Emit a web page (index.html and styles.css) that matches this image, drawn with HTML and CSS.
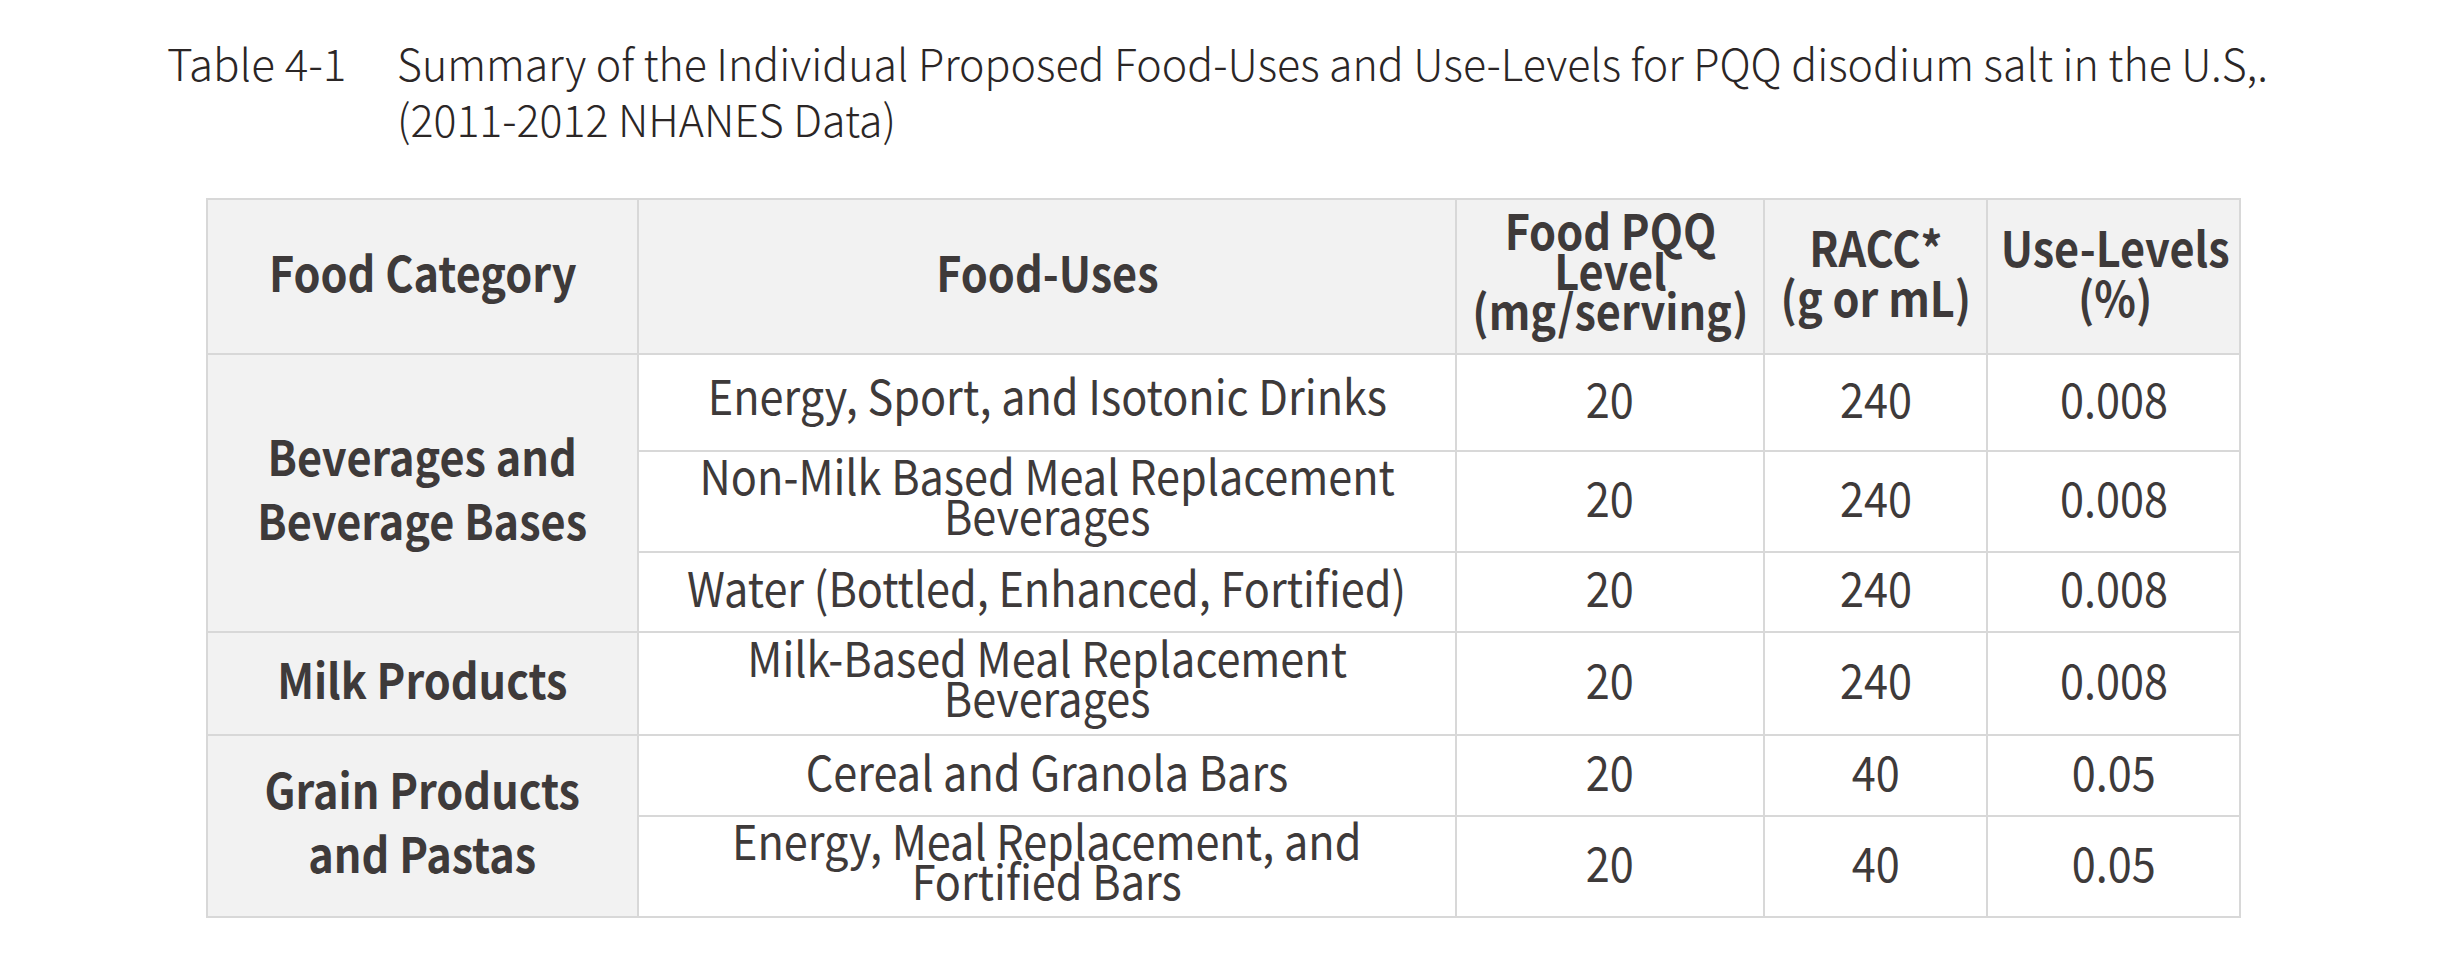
FILE: index.html
```html
<!DOCTYPE html>
<html>
<head>
<meta charset="utf-8">
<link rel="stylesheet" href="styles.css">
</head>
<body>
<div class="page">
  <div class="caption">
    <div class="cap-label">Table 4-1</div>
    <div class="cap-text">Summary of the Individual Proposed Food-Uses and Use-Levels for PQQ disodium salt in the U.S,.<br>(2011-2012 NHANES Data)</div>
  </div>
  <table class="data">
    <colgroup>
      <col class="c1"><col class="c2"><col class="c3"><col class="c4"><col class="c5">
    </colgroup>
    <thead>
      <tr class="h-row">
        <th><span class="t">Food Category</span></th>
        <th><span class="t">Food-Uses</span></th>
        <th><span class="t tight">Food PQQ<br>Level<br>(mg/serving)</span></th>
        <th><span class="t mid">RACC*<br>(g or mL)</span></th>
        <th><span class="t mid">Use-Levels<br>(%)</span></th>
      </tr>
    </thead>
    <tbody>
      <tr class="r1">
        <th rowspan="3" class="cat"><span class="t wide">Beverages and<br>Beverage Bases</span></th>
        <td><span class="t raise">Energy, Sport, and Isotonic Drinks</span></td>
        <td><span class="t">20</span></td><td><span class="t">240</span></td><td><span class="t">0.008</span></td>
      </tr>
      <tr class="r2">
        <td><span class="t tight">Non-Milk Based Meal Replacement<br>Beverages</span></td>
        <td><span class="t">20</span></td><td><span class="t">240</span></td><td><span class="t">0.008</span></td>
      </tr>
      <tr class="r3">
        <td><span class="t">Water (Bottled, Enhanced, Fortified)</span></td>
        <td><span class="t">20</span></td><td><span class="t">240</span></td><td><span class="t">0.008</span></td>
      </tr>
      <tr class="r4">
        <th class="cat"><span class="t">Milk Products</span></th>
        <td><span class="t tight">Milk-Based Meal Replacement<br>Beverages</span></td>
        <td><span class="t">20</span></td><td><span class="t">240</span></td><td><span class="t">0.008</span></td>
      </tr>
      <tr class="r5">
        <th rowspan="2" class="cat"><span class="t wide">Grain Products<br>and Pastas</span></th>
        <td><span class="t">Cereal and Granola Bars</span></td>
        <td><span class="t">20</span></td><td><span class="t">40</span></td><td><span class="t">0.05</span></td>
      </tr>
      <tr class="r6">
        <td><span class="t tight">Energy, Meal Replacement, and<br>Fortified Bars</span></td>
        <td><span class="t">20</span></td><td><span class="t">40</span></td><td><span class="t">0.05</span></td>
      </tr>
    </tbody>
  </table>
</div>
</body>
</html>
```

FILE: styles.css
```css
html, body {
  margin: 0;
  padding: 0;
  background: #ffffff;
}

body {
  font-family: "Noto Sans CJK JP", "Noto Sans", sans-serif;
  color: #3e3a3a;
}

.caption {
  display: flex;
  padding: 34px 0 0 167px;
  color: #2b2626;
  font-size: 44px;
  line-height: 56px;
  font-weight: 300;
}

.cap-label {
  width: 230px;
  flex: none;
}

.cap-text {
  transform: scaleX(0.975);
  transform-origin: left top;
  white-space: nowrap;
}

.data {
  margin: 52px 0 0 206px;
  border-collapse: collapse;
  table-layout: fixed;
  width: 2033px;
}

.c1 { width: 431px; }
.c2 { width: 818px; }
.c3 { width: 308px; }
.c4 { width: 223px; }
.c5 { width: 253px; }

.data th,
.data td {
  border: 2px solid #d8d8d8;
  padding: 0;
  text-align: center;
  vertical-align: middle;
  font-size: 48px;
  line-height: 48px;
}

.data th {
  font-weight: 700;
  background: #f2f2f2;
}

.data td {
  font-weight: 400;
  background: #ffffff;
}

.t {
  display: inline-block;
  white-space: nowrap;
  transform: translateY(-6px) scaleX(0.9);
}

.raise {
  transform: translateY(-9px) scaleX(0.9);
}

.tight {
  line-height: 40px;
}

.mid {
  line-height: 50px;
}

.wide {
  line-height: 64px;
}

.h-row { height: 155px; }
.r1 { height: 97px; }
.r2 { height: 101px; }
.r3 { height: 80px; }
.r4 { height: 103px; }
.r5 { height: 81px; }
.r6 { height: 101px; }
```
